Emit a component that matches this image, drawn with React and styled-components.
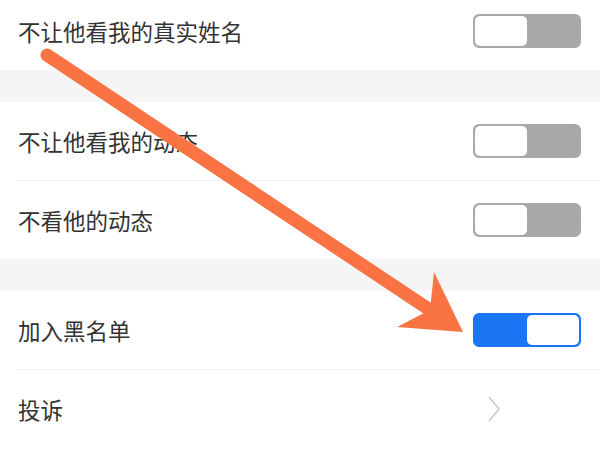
import React from 'react'
import styled, { createGlobalStyle } from 'styled-components'

const GlobalStyle = createGlobalStyle`
    html, body {
        margin: 0;
        padding: 0;
        background: #ffffff;
        overflow: hidden;
    }
    body {
        font-family: "Noto Sans CJK SC", "Noto Sans", sans-serif;
    }
`

const Screen = styled.div`
    position: relative;
    width: 600px;
    height: 450px;
    overflow: hidden;
    background: #ffffff;
`

const List = styled.div`
    display: flex;
    flex-direction: column;
    margin-top: -8px;
`

const Group = styled.div`
    display: flex;
    flex-direction: column;
    background: #ffffff;
`

const Gap = styled.div`
    height: 32px;
    background: #f5f5f5;
`

const Row = styled.div`
    height: 78px;
    display: flex;
    align-items: center;
    justify-content: space-between;
    padding: 0 19px 0 18px;
    box-sizing: border-box;
`

const Divider = styled.div`
    height: 1px;
    margin-left: 16px;
    background: #f0f0f0;
`

const Label = styled.span`
    font-size: 22.5px;
    color: #333333;
`

const Toggle = styled.div`
    width: 108px;
    height: 34px;
    box-sizing: border-box;
    border-radius: 6px;
    border: 2px solid ${p => (p.$on ? '#1a76f2' : '#a9a9a9')};
    background: ${p => (p.$on ? '#1a76f2' : '#a8a8a8')};
    display: flex;
    justify-content: ${p => (p.$on ? 'flex-end' : 'flex-start')};
    overflow: hidden;
`

const Knob = styled.div`
    width: 52px;
    height: 100%;
    background: #ffffff;
    border-radius: 5px;
`

const Chevron = styled.svg`
    margin-right: 80px;
`

const Overlay = styled.svg`
    position: absolute;
    left: 0;
    top: 0;
    pointer-events: none;
`

function Switch({ on }) {
    return (
        <Toggle $on={on}>
            <Knob />
        </Toggle>
    )
}

function App() {
    return (
        <Screen>
            <GlobalStyle />
            <List>
                <Group>
                    <Row>
                        <Label>不让他看我的真实姓名</Label>
                        <Switch />
                    </Row>
                </Group>
                <Gap />
                <Group>
                    <Row>
                        <Label>不让他看我的动态</Label>
                        <Switch />
                    </Row>
                    <Divider />
                    <Row>
                        <Label>不看他的动态</Label>
                        <Switch />
                    </Row>
                </Group>
                <Gap />
                <Group>
                    <Row>
                        <Label>加入黑名单</Label>
                        <Switch on />
                    </Row>
                    <Divider />
                    <Row>
                        <Label>投诉</Label>
                        <Chevron width="14" height="26" viewBox="0 0 14 26">
                            <path d="M2 1 L12 13 L2 25" fill="none" stroke="#c8c8c8" strokeWidth="1.6" />
                        </Chevron>
                    </Row>
                </Group>
            </List>
            <Overlay width="600" height="450" viewBox="0 0 600 450">
                <line x1="47" y1="55" x2="436" y2="314" stroke="#fa7343" strokeWidth="13" strokeLinecap="round" />
                <polygon points="434,272 463,332 397,327 430,310" fill="#fa7343" />
            </Overlay>
        </Screen>
    )
}

export default App
